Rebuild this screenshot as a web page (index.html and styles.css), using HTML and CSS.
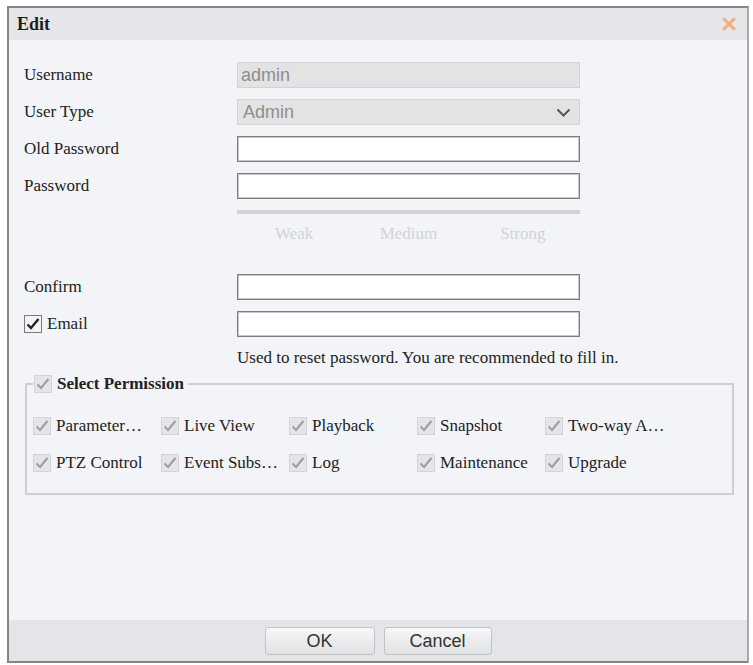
FILE: index.html
```html
<!DOCTYPE html>
<html lang="en">
<head>
<meta charset="utf-8">
<title>Edit</title>
<link rel="stylesheet" href="styles.css">
</head>
<body>
<div class="dialog">
  <div class="titlebar">
    <span class="title">Edit</span>
    <svg class="close" width="14" height="14" viewBox="0 0 14 14"><path d="M2 2 L12 12 M12 2 L2 12" stroke="#f1ad7a" stroke-width="3" stroke-linecap="round"/></svg>
  </div>
  <div class="body">
    <div class="row">
      <span class="label">Username</span>
      <div class="field disabled">admin</div>
    </div>
    <div class="row">
      <span class="label">User Type</span>
      <div class="field disabled select">
        <span>Admin</span>
        <svg width="15" height="9" viewBox="0 0 15 9"><polyline points="1.5,1.5 7.5,7.5 13.5,1.5" fill="none" stroke="#555" stroke-width="2"/></svg>
      </div>
    </div>
    <div class="row">
      <span class="label">Old Password</span>
      <div class="field"></div>
    </div>
    <div class="row">
      <span class="label">Password</span>
      <div class="field"></div>
    </div>
    <div class="strength">
      <div class="bar"></div>
      <div class="levels"><span>Weak</span><span>Medium</span><span>Strong</span></div>
    </div>
    <div class="row">
      <span class="label">Confirm</span>
      <div class="field"></div>
    </div>
    <div class="row">
      <span class="label email-label">
        <span class="cb cb-on"><svg width="16" height="16" viewBox="0 0 16 16"><path d="M2.5 8.5 L6 12 L13.5 3" fill="none" stroke="#222" stroke-width="2.4"/></svg></span>
        <span class="cb-text">Email</span>
      </span>
      <div class="field"></div>
    </div>
    <div class="hint">Used to reset password. You are recommended to fill in.</div>
    <fieldset class="perm">
      <legend>
        <span class="cb cb-dis"><svg width="16" height="16" viewBox="0 0 16 16"><path d="M2.5 8.5 L6 12 L13.5 3" fill="none" stroke="#9c9ea0" stroke-width="2"/></svg></span>
        <span class="legend-text">Select Permission</span>
      </legend>
      <div class="grid">
        <label class="item"><span class="cb cb-dis"><svg width="16" height="16" viewBox="0 0 16 16"><path d="M2.5 8.5 L6 12 L13.5 3" fill="none" stroke="#9c9ea0" stroke-width="2"/></svg></span><span class="name">Parameter…</span></label>
        <label class="item"><span class="cb cb-dis"><svg width="16" height="16" viewBox="0 0 16 16"><path d="M2.5 8.5 L6 12 L13.5 3" fill="none" stroke="#9c9ea0" stroke-width="2"/></svg></span><span class="name">Live View</span></label>
        <label class="item"><span class="cb cb-dis"><svg width="16" height="16" viewBox="0 0 16 16"><path d="M2.5 8.5 L6 12 L13.5 3" fill="none" stroke="#9c9ea0" stroke-width="2"/></svg></span><span class="name">Playback</span></label>
        <label class="item"><span class="cb cb-dis"><svg width="16" height="16" viewBox="0 0 16 16"><path d="M2.5 8.5 L6 12 L13.5 3" fill="none" stroke="#9c9ea0" stroke-width="2"/></svg></span><span class="name">Snapshot</span></label>
        <label class="item"><span class="cb cb-dis"><svg width="16" height="16" viewBox="0 0 16 16"><path d="M2.5 8.5 L6 12 L13.5 3" fill="none" stroke="#9c9ea0" stroke-width="2"/></svg></span><span class="name">Two-way A…</span></label>
        <label class="item"><span class="cb cb-dis"><svg width="16" height="16" viewBox="0 0 16 16"><path d="M2.5 8.5 L6 12 L13.5 3" fill="none" stroke="#9c9ea0" stroke-width="2"/></svg></span><span class="name">PTZ Control</span></label>
        <label class="item"><span class="cb cb-dis"><svg width="16" height="16" viewBox="0 0 16 16"><path d="M2.5 8.5 L6 12 L13.5 3" fill="none" stroke="#9c9ea0" stroke-width="2"/></svg></span><span class="name">Event Subs…</span></label>
        <label class="item"><span class="cb cb-dis"><svg width="16" height="16" viewBox="0 0 16 16"><path d="M2.5 8.5 L6 12 L13.5 3" fill="none" stroke="#9c9ea0" stroke-width="2"/></svg></span><span class="name">Log</span></label>
        <label class="item"><span class="cb cb-dis"><svg width="16" height="16" viewBox="0 0 16 16"><path d="M2.5 8.5 L6 12 L13.5 3" fill="none" stroke="#9c9ea0" stroke-width="2"/></svg></span><span class="name">Maintenance</span></label>
        <label class="item"><span class="cb cb-dis"><svg width="16" height="16" viewBox="0 0 16 16"><path d="M2.5 8.5 L6 12 L13.5 3" fill="none" stroke="#9c9ea0" stroke-width="2"/></svg></span><span class="name">Upgrade</span></label>
      </div>
    </fieldset>
  </div>
  <div class="footer">
    <button class="btn ok">OK</button>
    <button class="btn cancel">Cancel</button>
  </div>
</div>
</body>
</html>
```

FILE: styles.css
```css
html, body {
  margin: 0;
  padding: 0;
  background: #ffffff;
}

body {
  font-family: "Liberation Serif", "Times New Roman", serif;
  font-size: 17px;
  color: #222;
}

.dialog {
  box-sizing: border-box;
  width: 742px;
  height: 657px;
  margin: 6px 0 0 7px;
  border: 2px solid #858585;
  border-right-color: #a9a9a9;
  display: flex;
  flex-direction: column;
  background: #f2f4f7;
}

.titlebar {
  height: 32px;
  flex: none;
  display: flex;
  align-items: center;
  justify-content: space-between;
  padding: 0 11px 0 8px;
  background: #e4e6e9;
}

.title {
  font-weight: bold;
  font-size: 18px;
  color: #1e1e1e;
}

.close {
  display: block;
}

.body {
  flex: 1;
  padding: 22px 0 0 15px;
}

.row {
  display: flex;
  align-items: center;
  height: 26px;
  margin-bottom: 11px;
}

.label {
  width: 213px;
  flex: none;
  line-height: 20px;
}

.field {
  box-sizing: border-box;
  width: 343px;
  height: 26px;
  background: #ffffff;
  border: 1px solid #7d7d7d;
  box-shadow: inset 0 0 0 1px #c9c9c9;
}

.field.disabled {
  background: #e3e3e3;
  border-color: #d3d3d3;
  box-shadow: none;
  font-family: "Liberation Sans", Arial, sans-serif;
  font-size: 18px;
  color: #8e8e8e;
  line-height: 24px;
  padding-left: 3px;
}

.field.select {
  display: flex;
  align-items: center;
  justify-content: space-between;
  padding: 0 8px 0 5px;
}

.field.select svg {
  display: block;
}

.strength {
  margin-left: 213px;
  width: 343px;
  margin-bottom: 30px;
}

.bar {
  height: 4px;
  background: #cfd2d6;
}

.levels {
  display: grid;
  grid-template-columns: 1fr 1fr 1fr;
  margin-top: 10px;
  line-height: 20px;
  text-align: center;
  color: #d0d3d6;
}

.email-label {
  display: flex;
  align-items: center;
}

.cb {
  box-sizing: border-box;
  width: 18px;
  height: 18px;
  flex: none;
  display: inline-flex;
  align-items: center;
  justify-content: center;
}

.cb svg {
  display: block;
}

.cb-on {
  border: 1px solid #7a7a7a;
  background: #f4f4f4;
}

.cb-dis {
  border: 1px solid #d2d4d7;
  background: #e3e5e8;
}

.cb-text {
  margin-left: 5px;
}

.hint {
  margin: 1px 0 0 213px;
  line-height: 20px;
  color: #222;
}

.perm {
  box-sizing: border-box;
  width: 709px;
  margin: 6px 0 0 1px;
  padding: 0 0 17px 6px;
  border: 2px solid #ccd0d4;
}

.perm legend {
  padding: 0 4px 0 1px;
  display: flex;
  align-items: center;
  line-height: 20px;
}

.legend-text {
  font-weight: bold;
  margin-left: 5px;
}

.grid {
  display: grid;
  grid-template-columns: repeat(5, 128px);
  grid-auto-rows: 26px;
  row-gap: 11px;
  margin-top: 19px;
}

.item {
  display: flex;
  align-items: center;
}

.name {
  margin-left: 5px;
  white-space: nowrap;
  line-height: 20px;
}

.footer {
  height: 41px;
  flex: none;
  display: flex;
  justify-content: center;
  align-items: flex-start;
  gap: 9px;
  padding-top: 7px;
  box-sizing: border-box;
  background: #e3e5e8;
}

.btn {
  height: 28px;
  border: 1px solid #c0c2c4;
  border-radius: 3px;
  background: linear-gradient(#f7f7f7, #e0e1e3);
  font-family: "Liberation Sans", Arial, sans-serif;
  font-size: 18px;
  color: #333;
  padding: 0;
}

.ok {
  width: 110px;
}

.cancel {
  width: 108px;
}
```
